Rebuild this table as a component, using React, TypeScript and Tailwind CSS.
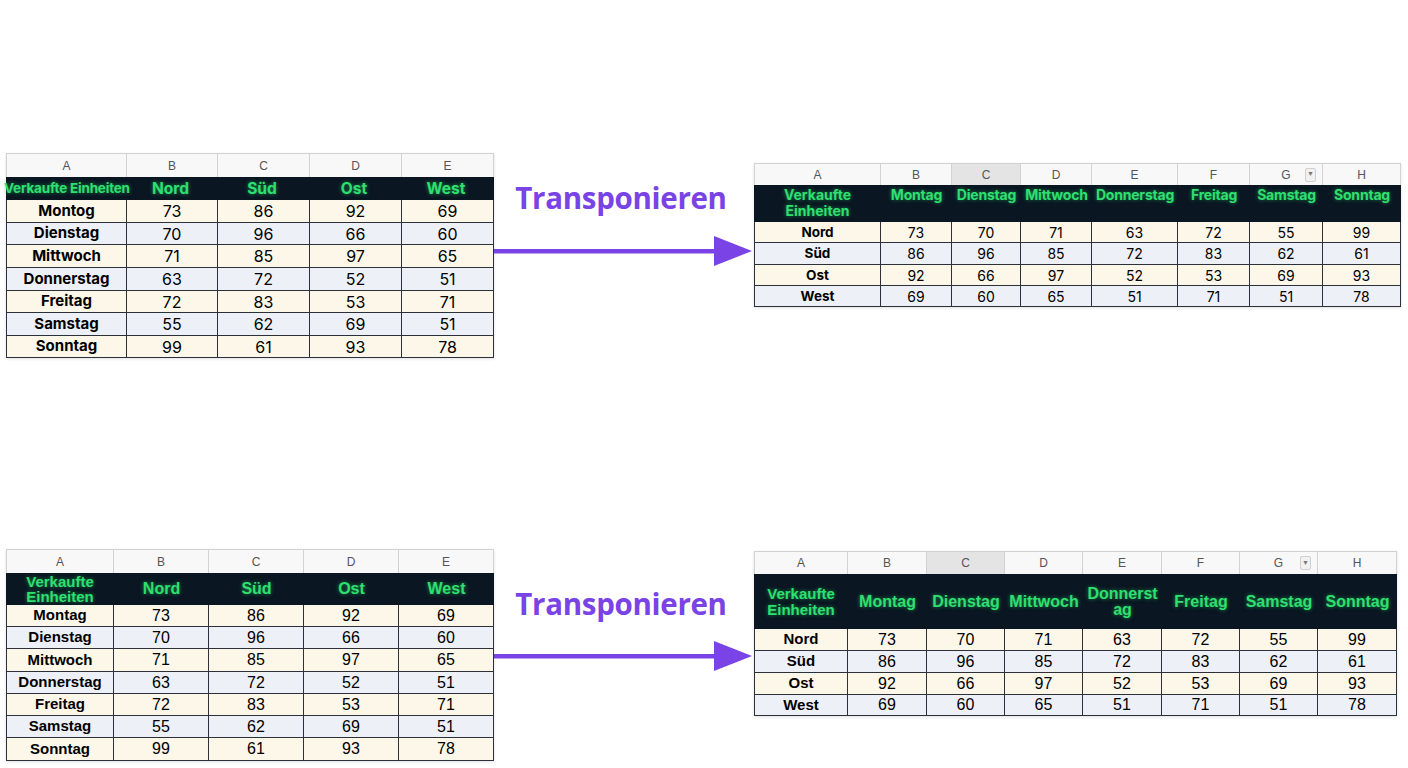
import React from 'react'

type Cfg = {
  cols: string[]
  letterH: string
  headH: string
  rowHs: string[]
  headAlign: string
  headText: string
  firstHeadText: string
  labelText: string
  numText: string
  firstHead: React.ReactNode
  head: string[]
  rows: (string | number)[][]
  grey?: number
  drop?: number
}

const letters = ['A', 'B', 'C', 'D', 'E', 'F', 'G', 'H']

const days = ['Montag', 'Dienstag', 'Mittwoch', 'Donnerstag', 'Freitag', 'Samstag', 'Sonntag']
const byDay: (string | number)[][] = [
  ['Montag', 73, 86, 92, 69],
  ['Dienstag', 70, 96, 66, 60],
  ['Mittwoch', 71, 85, 97, 65],
  ['Donnerstag', 63, 72, 52, 51],
  ['Freitag', 72, 83, 53, 71],
  ['Samstag', 55, 62, 69, 51],
  ['Sonntag', 99, 61, 93, 78],
]
const byRegion: (string | number)[][] = [
  ['Nord', 73, 70, 71, 63, 72, 55, 99],
  ['Süd', 86, 96, 85, 72, 83, 62, 61],
  ['Ost', 92, 66, 97, 52, 53, 69, 93],
  ['West', 69, 60, 65, 51, 71, 51, 78],
]
const regions = ['Nord', 'Süd', 'Ost', 'West']

function Sheet({ cfg }: { cfg: Cfg }) {
  return (
    <div className="flex flex-col bg-white shadow-[0_1px_3px_rgba(0,0,0,0.12)]">
      <div className={`flex ${cfg.letterH}`}>
        {cfg.cols.map((w, i) => (
          <div
            key={i}
            className={`${w} relative flex items-center justify-center border-t border-r border-[#d2d2d2] text-[12px] text-[#555] font-['Liberation_Sans',sans-serif] ${
              i === 0 ? 'border-l' : ''
            } ${cfg.grey === i ? 'bg-[#e4e4e4]' : 'bg-[#f8f8f8]'}`}
          >
            {letters[i]}
            {cfg.drop === i && (
              <span className="absolute right-[6px] top-1/2 -translate-y-1/2 flex h-[14px] w-[11px] items-center justify-center rounded-[2px] border border-[#d0d0d0] bg-[#f1f1f1] text-[7px] text-[#777]">
                ▼
              </span>
            )}
          </div>
        ))}
      </div>
      <div className={`flex bg-[#0a1622] ${cfg.headH}`}>
        {cfg.cols.map((w, i) => (
          <div
            key={i}
            className={`${w} flex ${i === 0 && cfg.firstHeadText.includes('nowrap') ? 'items-center justify-start' : cfg.headAlign} text-center text-[#2ee06f] [text-shadow:0_0_4px_rgba(46,224,111,0.55)] ${
              i === 0 ? cfg.firstHeadText : cfg.headText
            }`}
          >
            {i === 0 ? cfg.firstHead : cfg.head[i - 1]}
          </div>
        ))}
      </div>
      {cfg.rows.map((r, ri) => (
        <div
          key={ri}
          className={`flex ${cfg.rowHs[ri]} ${ri % 2 === 0 ? 'bg-[#fdf7ea]' : 'bg-[#eef0f7]'}`}
        >
          {cfg.cols.map((w, i) => (
            <div
              key={i}
              className={`${w} flex items-center justify-center border-r border-b border-[#2c3038] text-black ${
                i === 0 ? `border-l ${cfg.labelText}` : cfg.numText
              }`}
            >
              {r[i]}
            </div>
          ))}
        </div>
      ))}
    </div>
  )
}

const topLeft: Cfg = {
  cols: ['w-[121px]', 'w-[91px]', 'w-[92px]', 'w-[92px]', 'w-[92px]'],
  letterH: 'h-[24px]',
  headH: 'h-[23px]',
  rowHs: ['h-[23px]', 'h-[22px]', 'h-[23px]', 'h-[23px]', 'h-[22px]', 'h-[23px]', 'h-[22px]'],
  headAlign: 'items-center justify-center',
  headText: "font-['Inter',sans-serif] font-bold text-[15.5px]",
  firstHeadText: "font-['Inter',sans-serif] font-bold text-[13.5px] tracking-[-0.2px] whitespace-nowrap -ml-[2px] relative z-10",
  labelText: "font-['Inter',sans-serif] font-bold text-[15px]",
  numText: "font-['Inter',sans-serif] text-[16px]",
  firstHead: 'Verkaufte Einheiten',
  head: regions,
  rows: byDay.map((r, i) => (i === 0 ? ['Montog', ...r.slice(1)] : r)),
}

const topRight: Cfg = {
  cols: ['w-[127px]', 'w-[71px]', 'w-[69px]', 'w-[71px]', 'w-[86px]', 'w-[72px]', 'w-[73px]', 'w-[78px]'],
  letterH: 'h-[22px]',
  headH: 'h-[37px]',
  rowHs: ['h-[21px]', 'h-[22px]', 'h-[21px]', 'h-[21px]'],
  headAlign: 'items-start justify-center pt-[2px]',
  headText: "font-['Inter',sans-serif] font-bold text-[14px] whitespace-nowrap leading-[16px] tracking-[-0.2px]",
  firstHeadText: "font-['Inter',sans-serif] font-bold text-[14px] leading-[16px]",
  labelText: "font-['Inter',sans-serif] font-bold text-[13.5px]",
  numText: "font-['Inter',sans-serif] text-[14px]",
  firstHead: (
    <span>
      Verkaufte
      <br />
      Einheiten
    </span>
  ),
  head: days,
  rows: byRegion,
  grey: 2,
  drop: 6,
}

const bottomLeft: Cfg = {
  cols: ['w-[108px]', 'w-[95px]', 'w-[95px]', 'w-[95px]', 'w-[95px]'],
  letterH: 'h-[24px]',
  headH: 'h-[32px]',
  rowHs: ['h-[22px]', 'h-[22px]', 'h-[23px]', 'h-[22px]', 'h-[22px]', 'h-[22px]', 'h-[23px]'],
  headAlign: 'items-center justify-center',
  headText: "font-['Liberation_Sans',sans-serif] font-bold text-[16px]",
  firstHeadText: "font-['Liberation_Sans',sans-serif] font-bold text-[15px] leading-[15px]",
  labelText: "font-['Liberation_Sans',sans-serif] font-bold text-[15px]",
  numText: "font-['Liberation_Sans',sans-serif] text-[16px]",
  firstHead: (
    <span>
      Verkaufte
      <br />
      Einheiten
    </span>
  ),
  head: regions,
  rows: byDay,
}

const bottomRight: Cfg = {
  cols: ['w-[94px]', 'w-[79px]', 'w-[78px]', 'w-[78px]', 'w-[79px]', 'w-[78px]', 'w-[78px]', 'w-[79px]'],
  letterH: 'h-[23px]',
  headH: 'h-[55px]',
  rowHs: ['h-[22px]', 'h-[22px]', 'h-[22px]', 'h-[21px]'],
  headAlign: 'items-center justify-center',
  headText: "font-['Liberation_Sans',sans-serif] font-bold text-[16px] leading-[16px]",
  firstHeadText: "font-['Liberation_Sans',sans-serif] font-bold text-[15px] leading-[16px]",
  labelText: "font-['Liberation_Sans',sans-serif] font-bold text-[15px]",
  numText: "font-['Liberation_Sans',sans-serif] text-[16px]",
  firstHead: (
    <span>
      Verkaufte
      <br />
      Einheiten
    </span>
  ),
  head: ['Montag', 'Dienstag', 'Mittwoch', 'Donnerst ag', 'Freitag', 'Samstag', 'Sonntag'],
  rows: byRegion,
  grey: 2,
  drop: 6,
}

function Arrow() {
  return (
    <svg width="260" height="32" viewBox="0 0 260 32">
      <rect x="0" y="14" width="224" height="4.5" fill="#7a43e6" />
      <polygon points="220,1 258,16 220,31" fill="#7a43e6" />
    </svg>
  )
}

function Middle({ top, gap }: { top: string; gap: string }) {
  return (
    <div className={`flex w-[260px] flex-col items-center ${top}`}>
      <div className="-ml-[6px] font-['Open_Sans',sans-serif] text-[29.5px] font-bold leading-[36px] text-[#7a43e6] tracking-[-0.3px]">
        Transponieren
      </div>
      <div className={gap}>
        <Arrow />
      </div>
    </div>
  )
}

export default function App() {
  return (
    <div className="flex h-[768px] w-[1408px] flex-col overflow-hidden bg-white">
      <div className="flex h-[549px] items-start pl-[6px] pt-[153px]">
        <Sheet cfg={topLeft} />
        <Middle top="pt-[27px]" gap="mt-[19px]" />
        <div className="pt-[10px]">
          <Sheet cfg={topRight} />
        </div>
      </div>
      <div className="flex items-start pl-[6px]">
        <Sheet cfg={bottomLeft} />
        <Middle top="pt-[37px]" gap="mt-[18px]" />
        <div className="pt-[2px]">
          <Sheet cfg={bottomRight} />
        </div>
      </div>
    </div>
  )
}
